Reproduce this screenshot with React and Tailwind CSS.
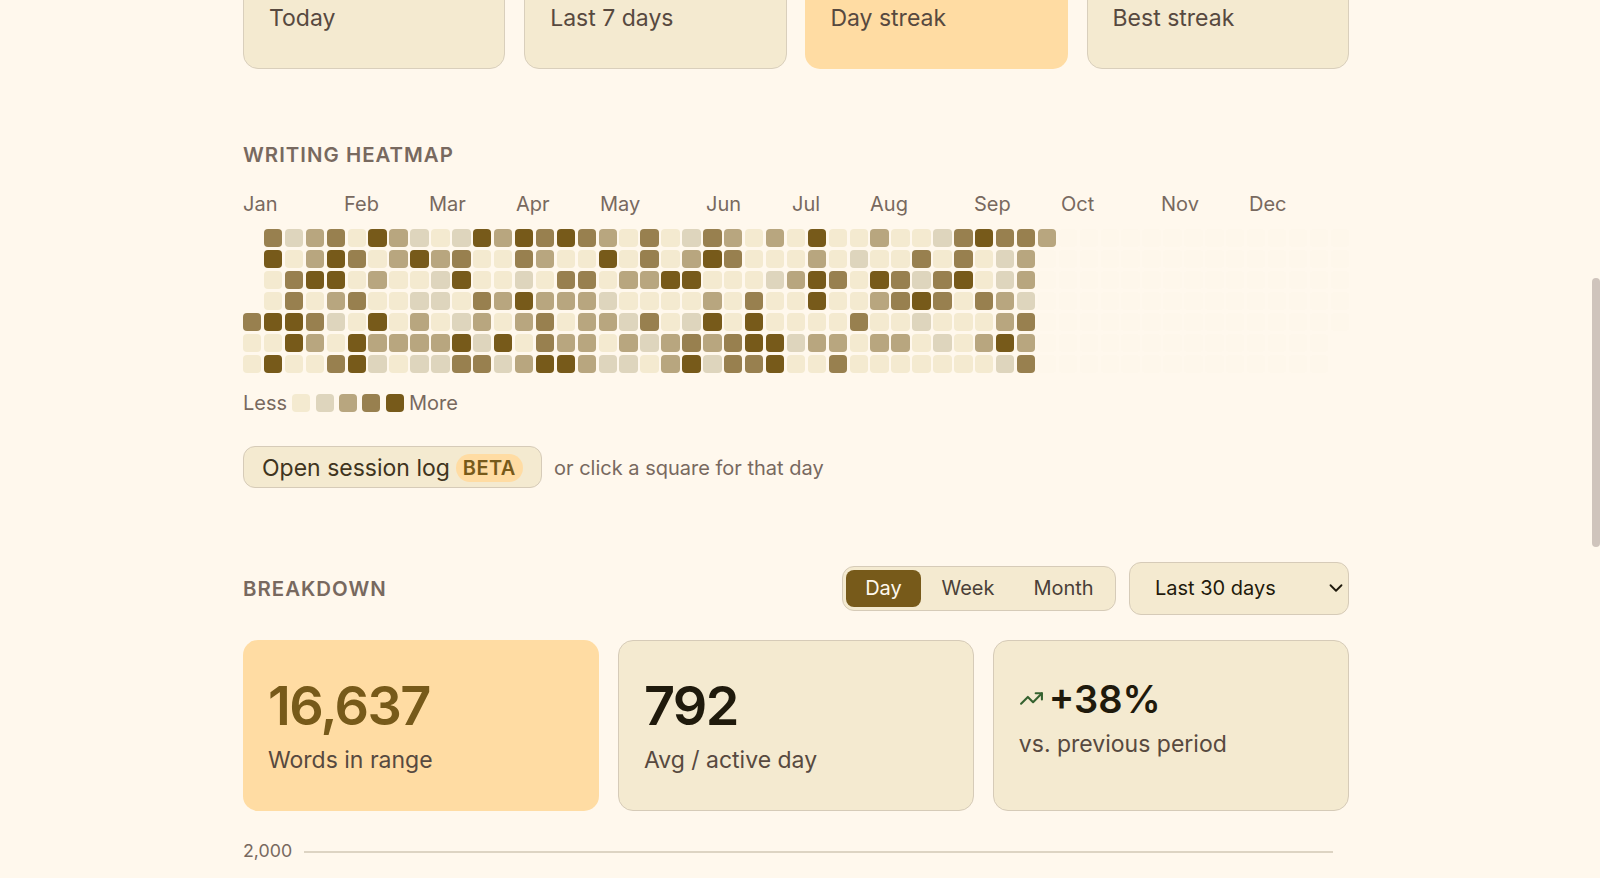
import React from 'react';
import { ChevronDown, TrendingUp } from 'lucide-react';

const months = [
    ['Jan', 'w-[101px]'], ['Feb', 'w-[85px]'], ['Mar', 'w-[87px]'], ['Apr', 'w-[84px]'],
    ['May', 'w-[106px]'], ['Jun', 'w-[86px]'], ['Jul', 'w-[78px]'], ['Aug', 'w-[104px]'],
    ['Sep', 'w-[87px]'], ['Oct', 'w-[100px]'], ['Nov', 'w-[88px]'], ['Dec', 'w-[60px]'],
];

// one string per weekday, one char per week. "." = no day, "f" = not yet happened
const rows = [
    '.31230421014243432030132020400200134332',
    '.402430242300320040302430002010030301 2',
    '.034402001400103302244000124304313401 2',
    '.030230011032422210000203004002343032 1',
    '3443104020120230221301404000030010002 3',
    '0042042222414032202123234412202201024 2',
    '0400341011331244211024133400300000001 3',
].map((r, i) => r.replace(/ /g, '').padEnd(i > 4 ? 52 : 53, 'f').padEnd(53, '.'));

const cellColors = {
    '.': '',
    f: 'bg-[#f4ead0] opacity-[0.05]',
    0: 'bg-[#f4ead0]',
    1: 'bg-[#ded5bd]',
    2: 'bg-[#b8a67f]',
    3: 'bg-[#98804f]',
    4: 'bg-[#775a1a]',
};

const legend = ['bg-[#f4ead0]', 'bg-[#ded5bd]', 'bg-[#b8a67f]', 'bg-[#98804f]', 'bg-[#775a1a]'];

const topCards = [
    { label: 'Today' },
    { label: 'Last 7 days' },
    { label: 'Day streak', accent: true },
    { label: 'Best streak' },
];

const Heatmap = () => (
    <div className="grid grid-flow-col grid-rows-7 auto-cols-fr gap-[2.5px]">
        {Array.from({ length: 53 }).map((_, col) =>
            rows.map((row, r) => (
                <div key={`${col}-${r}`} className={`aspect-square rounded-[4px] ${cellColors[row[col]]}`} />
            ))
        )}
    </div>
);

const App = () => {
    return (
        <div className="relative h-[878px] overflow-hidden bg-[#fff8ed] pr-2 font-['Inter',sans-serif] text-[#1f1a0c]">
            <div className="mx-auto w-[1106px]">
                {/* Stat cards, scrolled partly out of view */}
                <div className="-mt-[40px] grid grid-cols-4 gap-[18.75px]">
                    {topCards.map((c) => (
                        <div
                            key={c.label}
                            className={`flex h-[109px] flex-col rounded-[15px] px-[25px] text-[23px] leading-[34px] text-[#57493f] ${c.accent ? 'bg-[#ffdca3] pt-[41px]' : 'border border-[#d9cfbc] bg-[#f4ead0] pt-[40px]'}`}
                        >
                            {c.label}
                        </div>
                    ))}
                </div>

                {/* Heatmap */}
                <h2 className="mt-[72px] text-[20.4px] leading-[28px] font-semibold tracking-[0.05em] text-[#78695f] uppercase">
                    Writing heatmap
                </h2>
                <div className="mt-[21px] flex text-[20px] leading-[28px] text-[#78695f]">
                    {months.map(([m, w]) => (
                        <span key={m} className={w}>{m}</span>
                    ))}
                </div>
                <div className="mt-[11px]">
                    <Heatmap />
                </div>
                <div className="mt-[16px] flex items-center gap-[5.3px] text-[20px] leading-[28px] text-[#78695f]">
                    <span>Less</span>
                    {legend.map((c) => (
                        <span key={c} className={`h-[18px] w-[18px] rounded-[4px] ${c}`} />
                    ))}
                    <span>More</span>
                </div>
                <div className="mt-[29px] flex items-center gap-[12px]">
                    <button className="flex h-[42px] w-[299px] items-center gap-[6px] rounded-[12px] border border-[#d6cbb8] bg-[#f4ead0] pt-[2px] pl-[18px] text-[23px] text-[#3f3420]">
                        Open session log
                        <span className="rounded-full bg-[#ffdca3] px-[7px] py-[1px] text-[20px] leading-[26px] font-semibold tracking-[0.02em] text-[#775a1a]">BETA</span>
                    </button>
                    <span className="pt-[2px] text-[20px] text-[#78695f]">or click a square for that day</span>
                </div>

                {/* Breakdown */}
                <div className="mt-[74px] flex items-center justify-between">
                    <h2 className="mt-[2px] text-[20.4px] leading-[28px] font-semibold tracking-[0.05em] text-[#78695f] uppercase">Breakdown</h2>
                    <div className="flex items-center gap-[13px]">
                        <div className="flex h-[45px] w-[274px] items-center rounded-[12px] border border-[#d6cbb8] bg-[#f4ead0] p-[3px] text-[20px] text-[#4a4038]">
                            <span className="flex h-[37px] w-[75px] shrink-0 items-center justify-center rounded-[8px] bg-[#775a1a] text-[#fff8ed]">Day</span>
                            <span className="w-[94px] text-center">Week</span>
                            <span className="w-[97px] text-center">Month</span>
                        </div>
                        <div className="relative">
                            <select className="h-[53px] w-[220px] appearance-none rounded-[12px] border border-[#d6cbb8] bg-[#f4ead0] pl-[25px] text-[20px] text-[#1f1a0c]" defaultValue="30">
                                <option value="30">Last 30 days</option>
                                <option value="90">Last 90 days</option>
                            </select>
                            <ChevronDown size={22} strokeWidth={2} className="pointer-events-none absolute top-[15px] right-[2px] text-[#1f1a0c]" />
                        </div>
                    </div>
                </div>

                <div className="mt-[25px] grid grid-cols-3 gap-[18.75px]">
                    <div className="h-[171px] rounded-[15px] bg-[#ffdca3] px-[25px] pt-[33px]">
                        <div className="text-[54px] leading-[66px] font-semibold tracking-[-0.03em] text-[#775a1a]">16,637</div>
                        <div className="mt-[4px] text-[23px] leading-[34px] text-[#57493f]">Words in range</div>
                    </div>
                    <div className="h-[171px] rounded-[15px] border border-[#d6cbb8] bg-[#f4ead0] px-[25px] pt-[32px]">
                        <div className="text-[54px] leading-[66px] font-semibold tracking-[-0.03em] text-[#1f1a0c]">792</div>
                        <div className="mt-[4px] text-[23px] leading-[34px] text-[#57493f]">Avg / active day</div>
                    </div>
                    <div className="h-[171px] rounded-[15px] border border-[#d6cbb8] bg-[#f4ead0] px-[25px] pt-[33px]">
                        <div className="flex items-center gap-[5px] text-[38px] leading-[50px] font-semibold text-[#1f1a0c]">
                            <TrendingUp size={25} strokeWidth={2} className="text-[#35622f]" />
                            +38%
                        </div>
                        <div className="mt-[3px] text-[23px] leading-[34px] text-[#57493f]">vs. previous period</div>
                    </div>
                </div>

                {/* Chart, only the top gridline is in view */}
                <div className="mt-[27px] flex items-center gap-[12px] pr-[16px] text-[17.8px] leading-[26px] text-[#78695f]">
                    <span>2,000</span>
                    <div className="mt-[2px] h-[2px] flex-1 bg-[#ddd4c3]" />
                </div>
            </div>

            {/* Scrollbar thumb */}
            <div className="absolute top-[278px] right-0 h-[269px] w-2 rounded-full bg-[#cfc4bc]" />
        </div>
    );
};

export default App;
